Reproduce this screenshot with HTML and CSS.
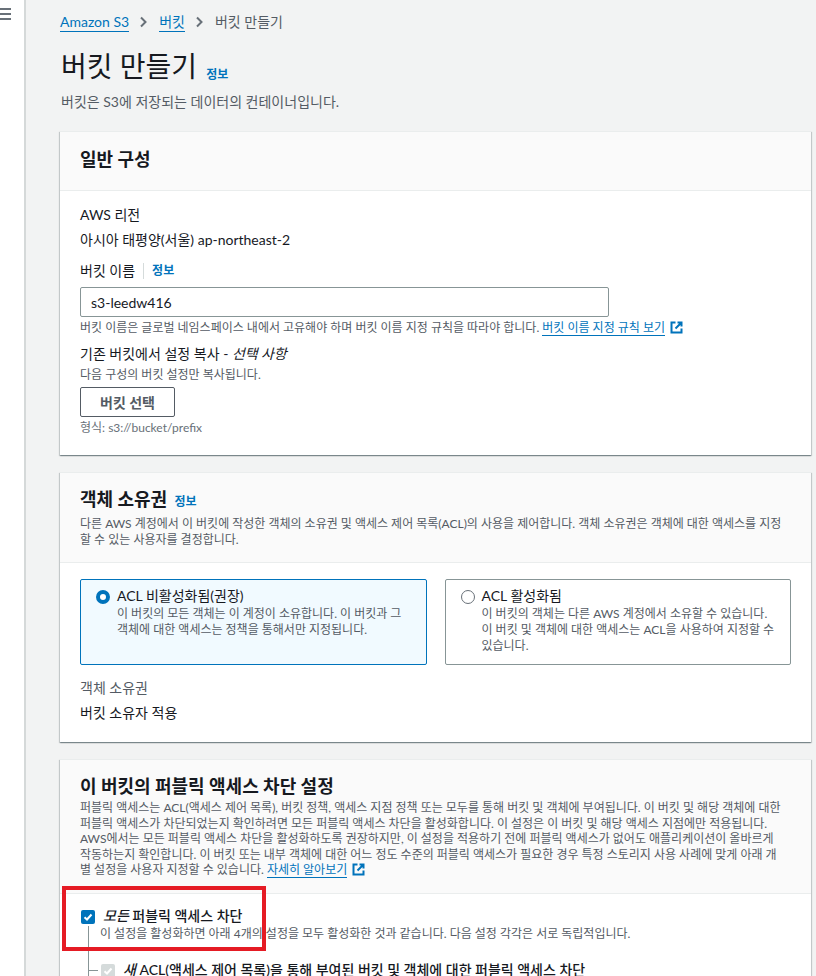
FILE: index.html
```html
<!DOCTYPE html>
<html lang="ko">
<head>
  <meta charset="UTF-8">
  <meta name="viewport" content="width=device-width, initial-scale=1.0">
  <title>버킷 만들기 - S3</title>
  <link rel="stylesheet" href="styles.css">
</head>
<body>
  <div class="side-nav">
    <span class="menu-bar"></span>
    <span class="menu-bar"></span>
    <span class="menu-bar"></span>
  </div>

  <div class="main">
    <nav class="breadcrumbs">
      <a href="#">Amazon S3</a>
      <svg class="chevron" width="10" height="12" viewBox="0 0 10 12"><path d="M2 1.5 6.5 6 2 10.5" fill="none" stroke="#687078" stroke-width="2"/></svg>
      <a href="#">버킷</a>
      <svg class="chevron" width="10" height="12" viewBox="0 0 10 12"><path d="M2 1.5 6.5 6 2 10.5" fill="none" stroke="#687078" stroke-width="2"/></svg>
      <span class="current">버킷 만들기</span>
    </nav>

    <div class="page-header">
      <h1>버킷 만들기 <a href="#" class="info-link">정보</a></h1>
      <p>버킷은 S3에 저장되는 데이터의 컨테이너입니다.</p>
    </div>

    <!-- 일반 구성 -->
    <section class="card">
      <div class="card-header">
        <h2>일반 구성</h2>
      </div>
      <div class="card-body general">
        <div class="label">AWS 리전</div>
        <div class="value">아시아 태평양(서울) ap-northeast-2</div>

        <div class="label bucket-name-label">버킷 이름 <span class="divider"></span><a href="#" class="info-link">정보</a></div>
        <input class="text-input" type="text" value="s3-leedw416">
        <div class="hint">버킷 이름은 글로벌 네임스페이스 내에서 고유해야 하며 버킷 이름 지정 규칙을 따라야 합니다. <a href="#" class="ext-link">버킷 이름 지정 규칙 보기</a>
          <svg class="ext-icon" width="13" height="13" viewBox="0 0 13 13"><path d="M5.5 1.5h-4v10h10v-4" fill="none" stroke="#0073bb" stroke-width="2"/><path d="M7.5 1.5h4v4M11.5 1.5 5.5 7.5" fill="none" stroke="#0073bb" stroke-width="2"/></svg>
        </div>

        <div class="label copy-label">기존 버킷에서 설정 복사 - <i>선택 사항</i></div>
        <div class="hint">다음 구성의 버킷 설정만 복사됩니다.</div>
        <button class="btn">버킷 선택</button>
        <div class="hint muted">형식: s3://bucket/prefix</div>
      </div>
    </section>

    <!-- 객체 소유권 -->
    <section class="card">
      <div class="card-header with-desc">
        <h2>객체 소유권 <a href="#" class="info-link">정보</a></h2>
        <p class="header-desc">다른 AWS 계정에서 이 버킷에 작성한 객체의 소유권 및 액세스 제어 목록(ACL)의 사용을 제어합니다. 객체 소유권은 객체에 대한 액세스를 지정할 수 있는 사용자를 결정합니다.</p>
      </div>
      <div class="card-body">
        <div class="tiles">
          <label class="tile selected">
            <span class="radio checked"></span>
            <span class="tile-text">
              <span class="tile-title">ACL 비활성화됨(권장)</span>
              <span class="tile-desc">이 버킷의 모든 객체는 이 계정이 소유합니다. 이 버킷과 그 객체에 대한 액세스는 정책을 통해서만 지정됩니다.</span>
            </span>
          </label>
          <label class="tile">
            <span class="radio"></span>
            <span class="tile-text">
              <span class="tile-title">ACL 활성화됨</span>
              <span class="tile-desc">이 버킷의 객체는 다른 AWS 계정에서 소유할 수 있습니다. 이 버킷 및 객체에 대한 액세스는 ACL을 사용하여 지정할 수 있습니다.</span>
            </span>
          </label>
        </div>
        <div class="label owner-label">객체 소유권</div>
        <div class="value">버킷 소유자 적용</div>
      </div>
    </section>

    <!-- 퍼블릭 액세스 차단 -->
    <section class="card">
      <div class="card-header with-desc">
        <h2>이 버킷의 퍼블릭 액세스 차단 설정</h2>
        <p class="header-desc">퍼블릭 액세스는 ACL(액세스 제어 목록), 버킷 정책, 액세스 지점 정책 또는 모두를 통해 버킷 및 객체에 부여됩니다. 이 버킷 및 해당 객체에 대한 퍼블릭 액세스가 차단되었는지 확인하려면 모든 퍼블릭 액세스 차단을 활성화합니다. 이 설정은 이 버킷 및 해당 액세스 지점에만 적용됩니다. AWS에서는 모든 퍼블릭 액세스 차단을 활성화하도록 권장하지만, 이 설정을 적용하기 전에 퍼블릭 액세스가 없어도 애플리케이션이 올바르게 작동하는지 확인합니다. 이 버킷 또는 내부 객체에 대한 어느 정도 수준의 퍼블릭 액세스가 필요한 경우 특정 스토리지 사용 사례에 맞게 아래 개별 설정을 사용자 지정할 수 있습니다. <a href="#" class="ext-link">자세히 알아보기</a>
          <svg class="ext-icon" width="13" height="13" viewBox="0 0 13 13"><path d="M5.5 1.5h-4v10h10v-4" fill="none" stroke="#0073bb" stroke-width="2"/><path d="M7.5 1.5h4v4M11.5 1.5 5.5 7.5" fill="none" stroke="#0073bb" stroke-width="2"/></svg>
        </p>
      </div>
      <div class="card-body block-body">
        <div class="highlight"></div>
        <div class="check-row">
          <span class="checkbox checked"><svg width="10" height="10" viewBox="0 0 10 10"><path d="M1.5 5.2 4 7.5l4.5-5" fill="none" stroke="#fff" stroke-width="2"/></svg></span>
          <span class="check-title"><i>모든</i> 퍼블릭 액세스 차단</span>
        </div>
        <div class="tree">
          <div class="check-desc">이 설정을 활성화하면 아래 4개의 설정을 모두 활성화한 것과 같습니다. 다음 설정 각각은 서로 독립적입니다.</div>
          <div class="check-row child">
            <span class="checkbox disabled"><svg width="10" height="10" viewBox="0 0 10 10"><path d="M1.5 5.2 4 7.5l4.5-5" fill="none" stroke="#fff" stroke-width="2"/></svg></span>
            <span class="check-title"><i>새</i> ACL(액세스 제어 목록)을 통해 부여된 버킷 및 객체에 대한 퍼블릭 액세스 차단</span>
          </div>
        </div>
      </div>
    </section>
  </div>
</body>
</html>
```

FILE: styles.css
```css
/* Page shell */
body {
  margin: 0;
  display: flex;
  min-height: 100vh;
  font-family: Lato, 'Noto Sans CJK KR', sans-serif;
  font-size: 14px;
  color: #16191f;
  background-color: #f2f3f3;
  overflow: hidden;
}

a {
  color: #0073bb;
  text-decoration: none;
}

.side-nav {
  width: 24px;
  flex-shrink: 0;
  background-color: #ffffff;
  border-right: 2px solid #d5d9d9;
  padding-top: 8px;
  display: flex;
  flex-direction: column;
  gap: 3px;
}

.menu-bar {
  display: block;
  width: 11px;
  height: 2px;
  background-color: #687078;
}

.main {
  flex: 1;
  padding: 11px 5px 0 34px;
}

/* Breadcrumbs */
.breadcrumbs {
  display: flex;
  align-items: center;
  gap: 10px;
  line-height: 20px;
  height: 22px;
}

.breadcrumbs a {
  color: #0073bb;
  border-bottom: 1px solid #0073bb;
  line-height: 18px;
}

.breadcrumbs .current {
  color: #545b64;
}

/* Title */
.page-header {
  margin: 15px 0 18px 1px;
}

.page-header h1 {
  margin: 0;
  font-size: 28px;
  font-weight: 400;
  line-height: 36px;
}

.page-header p {
  margin: 0;
  color: #545b64;
  line-height: 22px;
}

.info-link {
  font-size: 12px;
  font-weight: 700;
  color: #0073bb;
}

.page-header .info-link {
  position: relative;
  top: 2px;
  margin-left: 2px;
}

.card-header .info-link {
  margin-left: 3px;
}

/* Cards */
.card {
  background-color: #ffffff;
  border-top: 1px solid #eaeded;
  box-shadow: 0 1px 1px 0 rgba(0, 28, 36, 0.3), 1px 1px 1px 0 rgba(0, 28, 36, 0.15), -1px 1px 1px 0 rgba(0, 28, 36, 0.15);
  margin-bottom: 17px;
}

.card-header {
  background-color: #fafafa;
  border-bottom: 1px solid #eaeded;
  padding: 16px 20px 20px;
}

.card-header h2 {
  margin: 0;
  font-size: 18px;
  font-weight: 700;
  line-height: 22px;
}

.card-header.with-desc {
  padding: 15px 25px 15px 20px;
}

.header-desc {
  margin: 3px 0 0;
  font-size: 12px;
  line-height: 15.5px;
  color: #545b64;
}

.card-body {
  padding: 14px 20px 19px;
}

.label {
  line-height: 20px;
}

.value {
  line-height: 20px;
  margin-top: 5px;
}

.bucket-name-label {
  margin-top: 11px;
  display: flex;
  align-items: center;
}

.divider {
  display: inline-block;
  width: 1px;
  height: 16px;
  background-color: #d5dbdb;
  margin: 0 8px 0 8px;
}

.text-input {
  display: block;
  box-sizing: border-box;
  width: 529px;
  height: 30px;
  margin-top: 6px;
  padding: 0 10px;
  border: 1px solid #879596;
  border-radius: 2px;
  font-family: inherit;
  font-size: 14px;
  color: #16191f;
}

.hint {
  font-size: 12px;
  line-height: 16px;
  color: #545b64;
  margin-top: 3px;
}

.hint.muted {
  color: #687078;
}

.ext-link {
  border-bottom: 1px solid #0073bb;
}

.ext-icon {
  vertical-align: -2px;
  margin-left: 2px;
}

.copy-label {
  margin-top: 8px;
}

.btn {
  display: block;
  margin-top: 4px;
  height: 30px;
  padding: 0 19px;
  background-color: #ffffff;
  border: 1px solid #545b64;
  border-radius: 2px;
  font-family: inherit;
  font-size: 14px;
  font-weight: 700;
  color: #545b64;
}

/* Object ownership tiles */
.tiles {
  display: grid;
  grid-template-columns: 1fr 1fr;
  gap: 18px;
  margin-top: 2px;
}

.tile {
  display: flex;
  gap: 7px;
  min-height: 85px;
  box-sizing: border-box;
  padding: 7px 12px 10px 15px;
  border: 1px solid #879596;
  border-radius: 2px;
}

.tile.selected {
  background-color: #f1faff;
  border-color: #0073bb;
}

.radio {
  flex-shrink: 0;
  box-sizing: border-box;
  width: 14px;
  height: 14px;
  margin-top: 3px;
  border: 1px solid #687078;
  border-radius: 50%;
  background-color: #ffffff;
}

.radio.checked {
  border: 4px solid #0073bb;
}

.tile-text {
  display: flex;
  flex-direction: column;
}

.tile-title {
  line-height: 18px;
}

.tile-desc {
  margin-top: 1px;
  font-size: 12px;
  line-height: 16px;
  color: #545b64;
}

.owner-label {
  margin-top: 13px;
  color: #545b64;
}

/* Block public access */
.block-body {
  position: relative;
  padding-top: 12px;
  padding-left: 21px;
}

.highlight {
  position: absolute;
  left: 2px;
  top: -8px;
  width: 196px;
  height: 57px;
  border: 4px solid #e51b24;
}

.check-row {
  display: flex;
  align-items: center;
  gap: 8px;
  line-height: 20px;
}

.checkbox {
  box-sizing: border-box;
  display: flex;
  align-items: center;
  justify-content: center;
  width: 14px;
  height: 14px;
  border-radius: 2px;
  background-color: #0073bb;
  margin-top: 3px;
}

.checkbox.disabled {
  background-color: #d5dbdb;
}

.check-title {
  font-weight: 500;
}

.tree {
  margin-left: 7px;
  padding-left: 12px;
  border-left: 1px solid #879596;
}

.check-desc {
  font-size: 12px;
  line-height: 16px;
  color: #545b64;
  margin-left: -1px;
}

.check-row.child {
  position: relative;
  margin-top: 18px;
  font-weight: 700;
}

.check-row.child::before {
  content: "";
  position: absolute;
  left: -12px;
  top: 10px;
  width: 9px;
  border-top: 1px solid #879596;
}
```
